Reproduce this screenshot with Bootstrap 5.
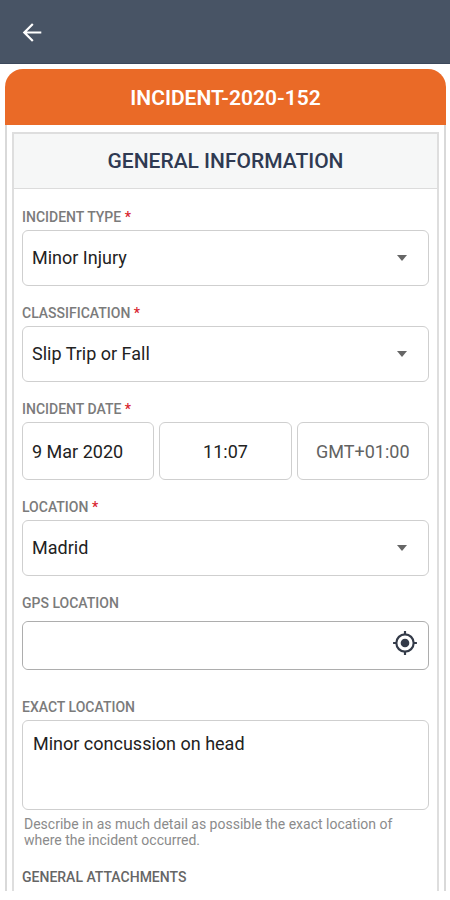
<!DOCTYPE html>
<html lang="en">
<head>
<meta charset="utf-8">
<meta name="viewport" content="width=device-width, initial-scale=1">
<title>INCIDENT-2020-152</title>
<link href="https://cdn.jsdelivr.net/npm/bootstrap@5.3.0/dist/css/bootstrap.min.css" rel="stylesheet">
<style>
body{font-family:Roboto,"Liberation Sans",sans-serif;background:#fff;color:#222}
.top-bar{background:#485465;padding:16px 16px 15px;border-bottom:1px solid #3c485b}
.back-btn{width:32px;height:32px;color:#fff}
.sheet{margin:5px 4px 8px 5px}
.sheet-title{background:#ea6a27;color:#fff;font-size:21px;line-height:24px;font-weight:600;padding:17px 0 15px;border-radius:18px 18px 0 0}
.sheet-body{border:2px solid #d9d9d9;border-width:0 2px;padding:7px 5px 0}
.section-box{border:2px solid #dedede;border-bottom:0}
.section-title{background:#f6f7f7;color:#2f3a52;font-size:21px;line-height:24px;font-weight:500;padding:15px 0;border-bottom:1px solid #dcdcdc}
.form-area{padding:20px 8px 6px}
.field{margin-bottom:19px}
.field-wide{margin-bottom:29px}
.field-label{display:block;font-size:14px;line-height:16px;font-weight:500;color:#7b7b7b;margin-bottom:5px}
.field-wide .field-label{margin-bottom:10px}
.req{color:#d8232e}
.box,.box:focus{font-size:18px;line-height:24px;color:#222;border:1px solid #cfcfcf;border-radius:6px;padding:0 9px;height:56px;background-color:#fff}
.box.form-select{background-image:url("data:image/svg+xml,%3Csvg xmlns='http://www.w3.org/2000/svg' viewBox='0 0 10 6'%3E%3Cpath d='M0 0h10L5 6z' fill='%23666'/%3E%3C/svg%3E");background-size:10px 6px;background-position:right 21px center}
.date-row{gap:5px}
.date-row .box{height:58px}
.zone{color:#626262}
.gps-group{border:1px solid #adadad;border-radius:6px;height:49px}
.gps-group .box{border:0;height:100%}
.gps-btn{width:28px;height:28px;margin:-6px 9px 0 0;color:#343b49}
textarea.box{height:90px;padding:11px 10px;resize:none}
.hint{font-size:14px;line-height:16px;color:#8b8b8b;margin:6px 2px 21px}
.attach-label{color:#666;margin:0}
</style>
</head>
<body>
<nav class="top-bar d-flex align-items-center">
  <button type="button" class="back-btn btn p-0 border-0 d-flex align-items-center justify-content-center" aria-label="Back">
    <svg width="20" height="20" viewBox="0 0 20 20" fill="none" stroke="currentColor" stroke-width="2.2" aria-hidden="true"><path d="M19.3 10.5H2.2M10.8 2L2.3 10.5l8.5 8.5"/></svg>
  </button>
</nav>
<main class="sheet">
  <h1 class="sheet-title text-center m-0">INCIDENT-2020-152</h1>
  <div class="sheet-body">
  <section class="section-box">
    <h2 class="section-title text-center m-0">GENERAL INFORMATION</h2>
    <form class="form-area">
      <div class="field">
        <label class="field-label" for="type">INCIDENT TYPE <span class="req">*</span></label>
        <select class="form-select box" id="type"><option>Minor Injury</option></select>
      </div>
      <div class="field">
        <label class="field-label" for="class">CLASSIFICATION <span class="req">*</span></label>
        <select class="form-select box" id="class"><option>Slip Trip or Fall</option></select>
      </div>
      <div class="field">
        <label class="field-label" for="date">INCIDENT DATE <span class="req">*</span></label>
        <div class="date-row d-flex">
          <input class="form-control box" id="date" type="text" value="9 Mar 2020">
          <input class="form-control box text-center" type="text" value="11:07" aria-label="Incident time">
          <input class="form-control box zone text-center" type="text" value="GMT+01:00" aria-label="Time zone">
        </div>
      </div>
      <div class="field">
        <label class="field-label" for="location">LOCATION <span class="req">*</span></label>
        <select class="form-select box" id="location"><option>Madrid</option></select>
      </div>
      <div class="field-wide">
        <label class="field-label" for="gps">GPS LOCATION</label>
        <div class="gps-group d-flex align-items-center">
          <input class="form-control box" id="gps" type="text">
          <button type="button" class="gps-btn btn p-0 border-0 d-flex align-items-center justify-content-center flex-shrink-0" aria-label="Use current location">
            <svg width="26" height="26" viewBox="0 0 24 24" fill="currentColor" aria-hidden="true"><circle cx="12" cy="12" r="4"/><circle cx="12" cy="12" r="8" fill="none" stroke="currentColor" stroke-width="2"/><path d="M11 1h2v3h-2zM11 20h2v3h-2zM1 11h3v2H1zM20 11h3v2h-3z"/></svg>
          </button>
        </div>
      </div>
      <div>
        <label class="field-label" for="exact">EXACT LOCATION</label>
        <textarea class="form-control box" id="exact" aria-describedby="exact-hint">Minor concussion on head</textarea>
        <p class="hint" id="exact-hint">Describe in as much detail as possible the exact location of where the incident occurred.</p>
      </div>
      <h3 class="field-label attach-label">GENERAL ATTACHMENTS</h3>
    </form>
  </section>
  </div>
</main>
<script src="https://cdn.jsdelivr.net/npm/bootstrap@5.3.0/dist/js/bootstrap.bundle.min.js"></script>
</body>
</html>
